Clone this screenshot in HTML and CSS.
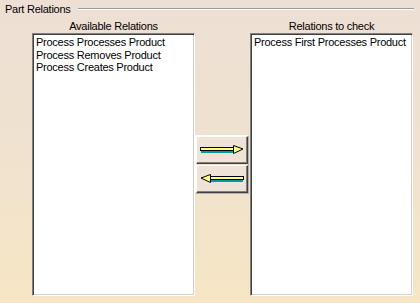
FILE: index.html
```html
<html lang="en">
<head>
    <meta charset="UTF-8">
    <title>Part Relations</title>
    <link rel="stylesheet" href="styles.css">
</head>
<body>
    <div class="group">
        <div class="group-title">
            <span>Part Relations</span>
            <div class="etched"></div>
        </div>
        <div class="panes">
            <div class="column">
                <p class="column-title">Available Relations</p>
                <div class="listbox">
                    <div class="item">Process Processes Product</div>
                    <div class="item">Process Removes Product</div>
                    <div class="item">Process Creates Product</div>
                </div>
            </div>
            <div class="movers">
                <div class="mover-frame">
                    <button class="mover">
                        <svg width="44" height="10" viewBox="0 0 44 10">
                            <rect x="1" y="4.5" width="33" height="3.5" fill="#009c9c"/>
                            <rect x="0.5" y="2.5" width="33" height="3" fill="#ffff80" stroke="#000"/>
                            <polygon points="33.5,0.5 43,4 33.5,8.5" fill="#ffff80" stroke="#000"/>
                        </svg>
                    </button>
                    <button class="mover">
                        <svg width="44" height="10" viewBox="0 0 44 10">
                            <rect x="10" y="4.5" width="33" height="3.5" fill="#009c9c"/>
                            <rect x="10.5" y="2.5" width="33" height="3" fill="#ffff80" stroke="#000"/>
                            <polygon points="10.5,0.5 1,4 10.5,8.5" fill="#ffff80" stroke="#000"/>
                        </svg>
                    </button>
                </div>
            </div>
            <div class="column">
                <p class="column-title">Relations to check</p>
                <div class="listbox">
                    <div class="item">Process First Processes Product</div>
                </div>
            </div>
        </div>
    </div>
</body>
</html>
```

FILE: styles.css
```css
body {
    margin: 0;
    height: 303px;
    font-family: 'Liberation Sans', Arial, sans-serif;
    font-size: 11px;
    letter-spacing: -0.25px;
    color: #000;
    background: linear-gradient(to bottom, #eddfd4 0%, #f0e2cf 50%, #f6e6c5 100%);
    overflow: hidden;
}
.group-title {
    display: flex;
    align-items: center;
    gap: 7px;
    padding: 3px 6px 0 5px;
    line-height: 13px;
}
.etched {
    flex: 1;
    border-top: 1px solid #a09890;
    border-bottom: 1px solid #fff;
    margin-top: -1px;
}
.panes {
    display: flex;
    margin: 3px 0 0 32px;
}
.column {
    width: 163px;
    display: flex;
    flex-direction: column;
}
.column-title {
    margin: 0;
    text-align: center;
    line-height: 14px;
}
.listbox {
    height: 259px;
    background: #fff;
    border-top: 1px solid #808080;
    border-left: 1px solid #808080;
    border-right: 1px solid #fff;
    border-bottom: 1px solid #fff;
    box-shadow: inset 1px 1px 0 #404040, inset -1px -1px 0 #d4d0c8;
    padding: 2px 0 0 2px;
}
.item {
    line-height: 12.5px;
    white-space: nowrap;
    padding-left: 1px;
}
.movers {
    display: flex;
    flex-direction: column;
    justify-content: center;
    padding-top: 14px;
    margin-right: 1px;
}
.mover-frame {
    display: flex;
    flex-direction: column;
    gap: 1px;
    border-top: 1px solid #fff;
    border-left: 1px solid #fff;
    border-right: 1px solid #b8b0a8;
    border-bottom: 1px solid #b8b0a8;
}
.mover {
    width: 52px;
    height: 28px;
    padding: 0;
    margin: 0;
    display: flex;
    align-items: center;
    justify-content: center;
    background: #efe2d6;
    border-top: 1px solid #fff;
    border-left: 1px solid #fff;
    border-right: 1px solid #404040;
    border-bottom: 1px solid #404040;
    box-shadow: inset -1px -1px 0 #808080;
}
```
